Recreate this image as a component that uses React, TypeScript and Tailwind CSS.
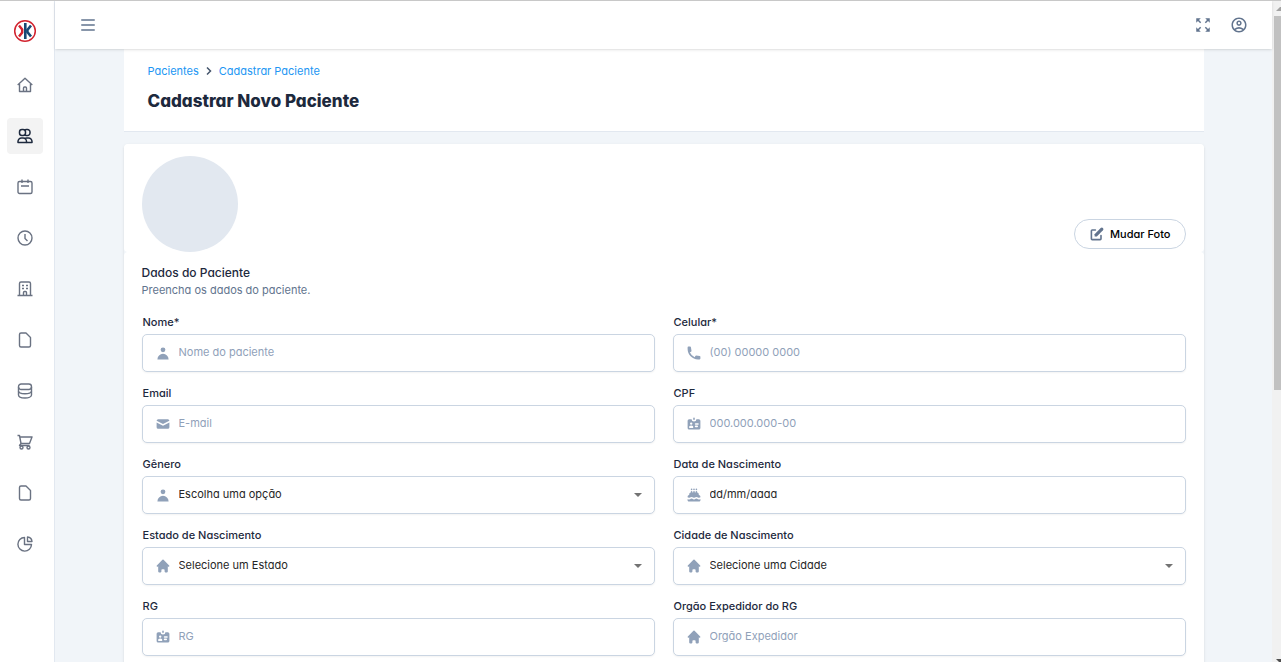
import type { ReactNode } from "react";
import type { IconType } from "react-icons";
import { HiCake, HiHome, HiIdentification, HiMail, HiPencilAlt, HiPhone, HiUser } from "react-icons/hi";
import { MdOutlineAccountCircle, MdZoomOutMap } from "react-icons/md";

type NavItem = { label: string; active?: boolean; icon: ReactNode };

const fileIcon = <path d="M4 1h5l4.500 4.500v8a1.500 1.500 0 0 1-1.500 1.500h-8a1.500 1.500 0 0 1-1.500-1.500v-11a1.500 1.500 0 0 1 1.500-1.500z" />;

const navItems: NavItem[] = [
  {
    label: "Início",
    icon: (
      <>
        <path d="M.7 8l7.300-6.700 7.300 6.700" />
        <path d="M2.500 7v7.500h11V7" />
        <path d="M6.500 14.500v-3.500a1 1 0 0 1 1-1h1a1 1 0 0 1 1 1v3.500" />
      </>
    ),
  },
  {
    label: "Pacientes",
    active: true,
    icon: (
      <>
        <rect x="2.500" y="1.500" width="6" height="6" rx="2.500" />
        <path d="M7.500 2.200a2.600 2.600 0 0 1 2-.7h1a2.500 2.500 0 0 1 2.500 2.500v1a2.500 2.500 0 0 1-2.500 2.500h-1a2.600 2.600 0 0 1-2-.7" />
        <path d="M1 14.500v-1a3.500 3.500 0 0 1 3.500-3.500h1.500a3.500 3.500 0 0 1 3.500 3.500v1z" />
        <path d="M7.500 10.700a4 4 0 0 1 2.500-.7h1.500a3.500 3.500 0 0 1 3.500 3.500v1h-5.500" />
      </>
    ),
  },
  {
    label: "Agenda",
    icon: (
      <>
        <rect x="1" y="2.500" width="14" height="12" rx="1.500" />
        <path d="M5 .5v3.500M11 .5v3.500M4 7h8" />
      </>
    ),
  },
  {
    label: "Horários",
    icon: (
      <>
        <circle cx="8" cy="8" r="7" />
        <path d="M8 4v4.500l2.500 2.500" />
      </>
    ),
  },
  {
    label: "Clínica",
    icon: (
      <>
        <path d="M.5 14.500h15M2.500 14.500V2.500a1.500 1.500 0 0 1 1.500-1.500h8a1.500 1.500 0 0 1 1.500 1.500v12" />
        <path d="M6.500 14.500v-3a1 1 0 0 1 1-1h1a1 1 0 0 1 1 1v3" />
        <path d="M5 4.500h2M9 4.500h2M5 7.500h2M9 7.500h2" />
      </>
    ),
  },
  { label: "Documentos", icon: fileIcon },
  {
    label: "Financeiro",
    icon: (
      <>
        <rect x="1.500" y="1" width="13" height="5.500" rx="2.700" />
        <path d="M1.500 4v8c0 1.700 2.900 3 6.500 3s6.500-1.300 6.500-3V4" />
        <path d="M1.500 8c0 1.700 2.900 2.700 6.500 2.700s6.500-1 6.500-2.700" />
      </>
    ),
  },
  {
    label: "Compras",
    icon: (
      <>
        <path d="M.5 1.500h2l1.500 8h8.500l2.500-6.500H3" />
        <path d="M4 9.500l-1.500 2h10" />
        <circle cx="4.500" cy="13.500" r="1.500" />
        <circle cx="11.500" cy="13.500" r="1.500" />
      </>
    ),
  },
  { label: "Arquivos", icon: fileIcon },
  {
    label: "Relatórios",
    icon: (
      <>
        <path d="M7.500 1.500a6.800 6.800 0 1 0 7 7h-7z" />
        <path d="M10.500 1v4.500h4.500a5 5 0 0 0-4.500-4.500z" />
      </>
    ),
  },
];

type FieldConfig = {
  id: string;
  label: string;
  icon: IconType;
  kind: "text" | "select" | "date";
  text: string;
};

const fields: FieldConfig[] = [
  { id: "nome", label: "Nome*", icon: HiUser, kind: "text", text: "Nome do paciente" },
  { id: "celular", label: "Celular*", icon: HiPhone, kind: "text", text: "(00) 00000 0000" },
  { id: "email", label: "Email", icon: HiMail, kind: "text", text: "E-mail" },
  { id: "cpf", label: "CPF", icon: HiIdentification, kind: "text", text: "000.000.000-00" },
  { id: "genero", label: "Gênero", icon: HiUser, kind: "select", text: "Escolha uma opção" },
  { id: "nascimento", label: "Data de Nascimento", icon: HiCake, kind: "date", text: "dd/mm/aaaa" },
  { id: "estado", label: "Estado de Nascimento", icon: HiHome, kind: "select", text: "Selecione um Estado" },
  { id: "cidade", label: "Cidade de Nascimento", icon: HiHome, kind: "select", text: "Selecione uma Cidade" },
  { id: "rg", label: "RG", icon: HiIdentification, kind: "text", text: "RG" },
  { id: "orgao", label: "Orgão Expedidor do RG", icon: HiHome, kind: "text", text: "Orgão Expedidor" },
];

function Logo() {
  return (
    <svg viewBox="0 0 24 24" className="size-6" fill="none" aria-hidden="true">
      <circle cx="12" cy="12" r="10.300" stroke="#d2232f" strokeWidth="1.500" />
      <path d="M6 6.500l3.200 4v3L6 17.500" stroke="#d2232f" strokeWidth="2.400" />
      <path d="M12.300 4v16" stroke="#174a75" strokeWidth="2.600" />
      <path d="M18 6.500L14.400 11v2l3.600 4.500" stroke="#174a75" strokeWidth="2.600" />
    </svg>
  );
}

function Sidebar() {
  return (
    <aside className="flex w-[55px] shrink-0 flex-col items-center border-r border-slate-200 bg-white pt-[18px] pr-1">
      <a href="#" aria-label="Página inicial">
        <Logo />
      </a>
      <nav className="mt-6 flex flex-col gap-[15px]">
        {navItems.map((item) => (
          <a
            key={item.label}
            href="#"
            aria-label={item.label}
            className={
              item.active
                ? "flex size-9 items-center justify-center rounded bg-[#f3f3f3] text-slate-800"
                : "flex size-9 items-center justify-center rounded text-gray-500"
            }
          >
            <svg
              viewBox="0 0 16 16"
              className="size-4"
              fill="none"
              stroke="currentColor"
              strokeWidth={item.active ? 1.5 : 1.4}
              strokeLinejoin="round"
            >
              {item.icon}
            </svg>
          </a>
        ))}
      </nav>
    </aside>
  );
}

function Topbar() {
  return (
    <header className="z-10 flex h-12 shrink-0 items-center justify-between bg-white pr-6 pl-[26px] text-slate-500 shadow">
      <button type="button" aria-label="Menu">
        <svg viewBox="0 0 14 14" className="size-[14px]" stroke="currentColor" strokeWidth="1.300" strokeLinecap="round">
          <path d="M.7 2h12.600M.7 7h12.600M.7 12h12.600" />
        </svg>
      </button>
      <div className="flex items-center gap-[18px]">
        <button type="button" aria-label="Tela cheia">
          <MdZoomOutMap className="size-[18px]" />
        </button>
        <button type="button" aria-label="Perfil">
          <MdOutlineAccountCircle className="size-[18px]" />
        </button>
      </div>
    </header>
  );
}

function Field({ field }: { field: FieldConfig }) {
  const Icon = field.icon;
  return (
    <div className="flex flex-col">
      <label htmlFor={field.id} className="mb-1 px-px leading-4 font-medium text-slate-800">
        {field.label}
      </label>
      <div className="flex h-[38px] items-center gap-2 rounded-[5px] border border-slate-300 bg-white pr-3 pl-3 shadow-xs focus-within:border-blue-500">
        <Icon className="size-4 shrink-0 text-slate-400" />
        {field.kind === "select" ? (
          <>
            <select id={field.id} className="h-full min-w-0 flex-1 appearance-none pb-[2px] text-neutral-800 outline-none">
              <option>{field.text}</option>
            </select>
            <svg viewBox="0 0 8 4" className="h-1 w-2 shrink-0 fill-neutral-500" aria-hidden="true">
              <path d="M0 0h8L4 4z" />
            </svg>
          </>
        ) : (
          <input
            id={field.id}
            type="text"
            placeholder={field.text}
            className={
              field.kind === "date"
                ? "h-full min-w-0 flex-1 pb-[2px] outline-none placeholder:text-neutral-800"
                : "h-full min-w-0 flex-1 pb-[2px] outline-none placeholder:text-slate-400"
            }
          />
        )}
      </div>
    </div>
  );
}

function PatientForm() {
  return (
    <form className="mt-3 rounded shadow">
      <div className="flex items-end justify-between rounded bg-white px-[18px] pt-3">
        <div className="size-24 rounded-full bg-slate-200" />
        <button
          type="button"
          className="mb-[3px] flex h-[30px] items-center gap-[5px] rounded-full border border-slate-300 px-[14px] font-medium text-black"
        >
          <HiPencilAlt className="size-4 text-slate-500" />
          Mudar Foto
        </button>
      </div>

      <div className="rounded bg-white px-[18px] pt-3 pb-6">
        <h2 className="text-xs leading-[18px] font-medium text-slate-800">Dados do Paciente</h2>
        <p className="leading-4 text-slate-500">Preencha os dados do paciente.</p>

        <div className="mt-4 grid grid-cols-2 gap-x-[18px] gap-y-[13px]">
          {fields.map((field) => (
            <Field key={field.id} field={field} />
          ))}
        </div>
      </div>
    </form>
  );
}

function PageScrollbar() {
  return (
    <div className="flex w-[9px] shrink-0 flex-col items-end bg-[#f1f1f1]" aria-hidden="true">
      <svg viewBox="0 0 7 15" className="h-[15px] w-[7px] shrink-0">
        <path d="M2 10l4-4h1v4z" fill="#a3a3a3" />
      </svg>
      <div className="h-[374px] w-[7px] bg-[#c1c1c1]" />
      <svg viewBox="0 0 7 3" className="mt-auto h-[3px] w-[7px] shrink-0">
        <path d="M2 0h5v3H5z" fill="#505050" />
      </svg>
    </div>
  );
}

export default function App() {
  return (
    <div className="flex h-screen overflow-hidden border-t border-[#c8c8c8] bg-slate-100 font-[Inter,sans-serif] text-[11px] leading-4 [font-feature-settings:'cv11']">
      <Sidebar />
      <div className="flex min-w-0 flex-1 flex-col">
        <Topbar />
        <main className="flex-1 overflow-hidden px-6">
          <div className="mx-auto w-full max-w-[1080px]">
            <div className="border-b border-slate-200 bg-white px-6 pt-[14px] pb-[17px]">
              <nav className="flex items-center gap-[5px] text-[#2196f3]" aria-label="Breadcrumb">
                <a href="#">Pacientes</a>
                <svg viewBox="0 0 10 10" className="size-[10px] text-slate-600" fill="none" stroke="currentColor" strokeWidth="1.500">
                  <path d="M3 1.500l3.500 3.500L3 8.500" />
                </svg>
                <a href="#">Cadastrar Paciente</a>
              </nav>
              <h1 className="mt-[9px] text-[17px] leading-[26px] font-extrabold text-slate-800">Cadastrar Novo Paciente</h1>
            </div>
            <PatientForm />
          </div>
        </main>
      </div>
      <PageScrollbar />
    </div>
  );
}
